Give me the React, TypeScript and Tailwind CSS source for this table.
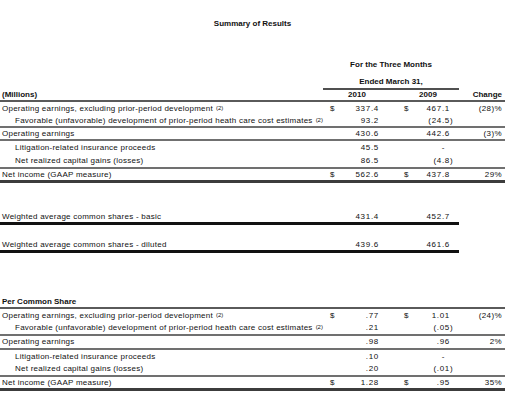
import React from 'react';

type Row = {
  label: string;
  indent?: boolean;
  note?: boolean;
  d1?: boolean;
  v1: string;
  d2?: boolean;
  v2: string;
  change?: string;
  h: string;
  line?: 'thin' | 'thick';
};

const results: Row[] = [
  { label: 'Operating earnings, excluding prior-period development', note: true, d1: true, v1: '337.4', d2: true, v2: '467.1', change: '(28)%', h: 'h-[13px]' },
  { label: 'Favorable (unfavorable) development of prior-period heath care cost estimates', indent: true, note: true, v1: '93.2', v2: '(24.5)', h: 'h-[13px]', line: 'thin' },
  { label: 'Operating earnings', v1: '430.6', v2: '442.6', change: '(3)%', h: 'h-[13px]', line: 'thin' },
  { label: 'Litigation-related insurance proceeds', indent: true, v1: '45.5', v2: '-', h: 'h-[14px]' },
  { label: 'Net realized capital gains (losses)', indent: true, v1: '86.5', v2: '(4.8)', h: 'h-[14px]', line: 'thin' },
  { label: 'Net income (GAAP measure)', d1: true, v1: '562.6', d2: true, v2: '437.8', change: '29%', h: 'h-[14px]', line: 'thick' },
];

const perShare: Row[] = [
  { label: 'Operating earnings, excluding prior-period development', note: true, d1: true, v1: '.77', d2: true, v2: '1.01', change: '(24)%', h: 'h-[13px]' },
  { label: 'Favorable (unfavorable) development of prior-period heath care cost estimates', indent: true, note: true, v1: '.21', v2: '(.05)', h: 'h-[14px]', line: 'thin' },
  { label: 'Operating earnings', v1: '.98', v2: '.96', change: '2%', h: 'h-[14px]', line: 'thin' },
  { label: 'Litigation-related insurance proceeds', indent: true, v1: '.10', v2: '-', h: 'h-[13px]' },
  { label: 'Net realized capital gains (losses)', indent: true, v1: '.20', v2: '(.01)', h: 'h-[14px]', line: 'thin' },
  { label: 'Net income (GAAP measure)', d1: true, v1: '1.28', d2: true, v2: '.95', change: '35%', h: 'h-[14px]', line: 'thick' },
];

// closing paren hangs past the column edge, like the printed tables do
const Num = ({ v }: { v: string }) =>
  v.endsWith(')') ? (
    <span>
      {v.slice(0, -1)}
      <span className="inline-block w-0">)</span>
    </span>
  ) : (
    <span>{v}</span>
  );

const Note = () => <sup className="ml-[3px] text-[6px] tracking-normal relative -top-[1px]">(2)</sup>;

const DataRow = ({ r }: { r: Row }) => (
  <div
    className={`flex items-center ${r.h} ${
      r.line === 'thin' ? 'border-b-2 border-[#707070]' : r.line === 'thick' ? 'border-b-[3px] border-[#3c3c3c]' : ''
    }`}
  >
    <div className={`flex-1 whitespace-nowrap tracking-[0.25px] ${r.indent ? 'pl-[15px]' : 'pl-[2px]'}`}>
      {r.label}
      {r.note && <Note />}
    </div>
    <div className="w-[68px] flex justify-between pl-[7px] pr-[12px] tracking-[0.7px]">
      <span>{r.d1 ? '$' : ''}</span>
      <Num v={r.v1} />
    </div>
    <div className="w-[68px] flex justify-between pl-[13px] pr-[9px] tracking-[0.7px]">
      <span>{r.d2 ? '$' : ''}</span>
      {r.v2 === '-' ? <span className="pr-[5px]">-</span> : <Num v={r.v2} />}
    </div>
    <div className="w-[46px] text-right pr-[3px] tracking-[0.4px]">{r.change}</div>
  </div>
);

const SharesRow = ({ label, v1, v2 }: { label: string; v1: string; v2: string }) => (
  <div className="flex items-center h-[16px] pt-[3px] w-[459px] border-b-[3px] border-[#111]">
    <div className="flex-1 pl-[2px] tracking-[0.25px]">{label}</div>
    <div className="w-[68px] text-right pr-[12px] tracking-[0.7px]">{v1}</div>
    <div className="w-[68px] text-right pr-[9px] tracking-[0.7px]">{v2}</div>
  </div>
);

export default function App() {
  return (
    <div className="w-[510px] h-[411px] bg-white text-[#111] text-[8px] leading-[10px] font-['Liberation_Sans',Arial,sans-serif]">
      <div className="w-[505px]">
        <div className="pt-[19px] text-center font-bold">Summary of Results</div>

        <div className="flex mt-[31px]">
          <div className="flex-1" />
          <div className="w-[136px] font-bold text-center">
            <div>For the Three Months</div>
            <div className="mt-[7px] pb-[1px] border-b-2 border-[#505050]">Ended March 31,</div>
          </div>
          <div className="w-[46px]" />
        </div>

        <div className="flex items-center h-[12px] font-bold border-b-2 border-[#5a5a5a]">
          <div className="flex-1 pl-[2px]">(Millions)</div>
          <div className="w-[68px] text-center">2010</div>
          <div className="w-[68px] text-center pl-[6px]">2009</div>
          <div className="w-[46px] text-right pr-[3px]">Change</div>
        </div>

        {results.map((r, i) => (
          <DataRow key={i} r={r} />
        ))}

        <div className="mt-[26px]">
          <SharesRow label="Weighted average common shares - basic" v1="431.4" v2="452.7" />
        </div>
        <div className="mt-[12px]">
          <SharesRow label="Weighted average common shares - diluted" v1="439.6" v2="461.6" />
        </div>

        <div className="mt-[43px] flex items-center h-[13px] font-bold border-b-2 border-[#5a5a5a]">
          <div className="pl-[2px]">Per Common Share</div>
        </div>

        {perShare.map((r, i) => (
          <DataRow key={i} r={r} />
        ))}
      </div>
    </div>
  );
}
